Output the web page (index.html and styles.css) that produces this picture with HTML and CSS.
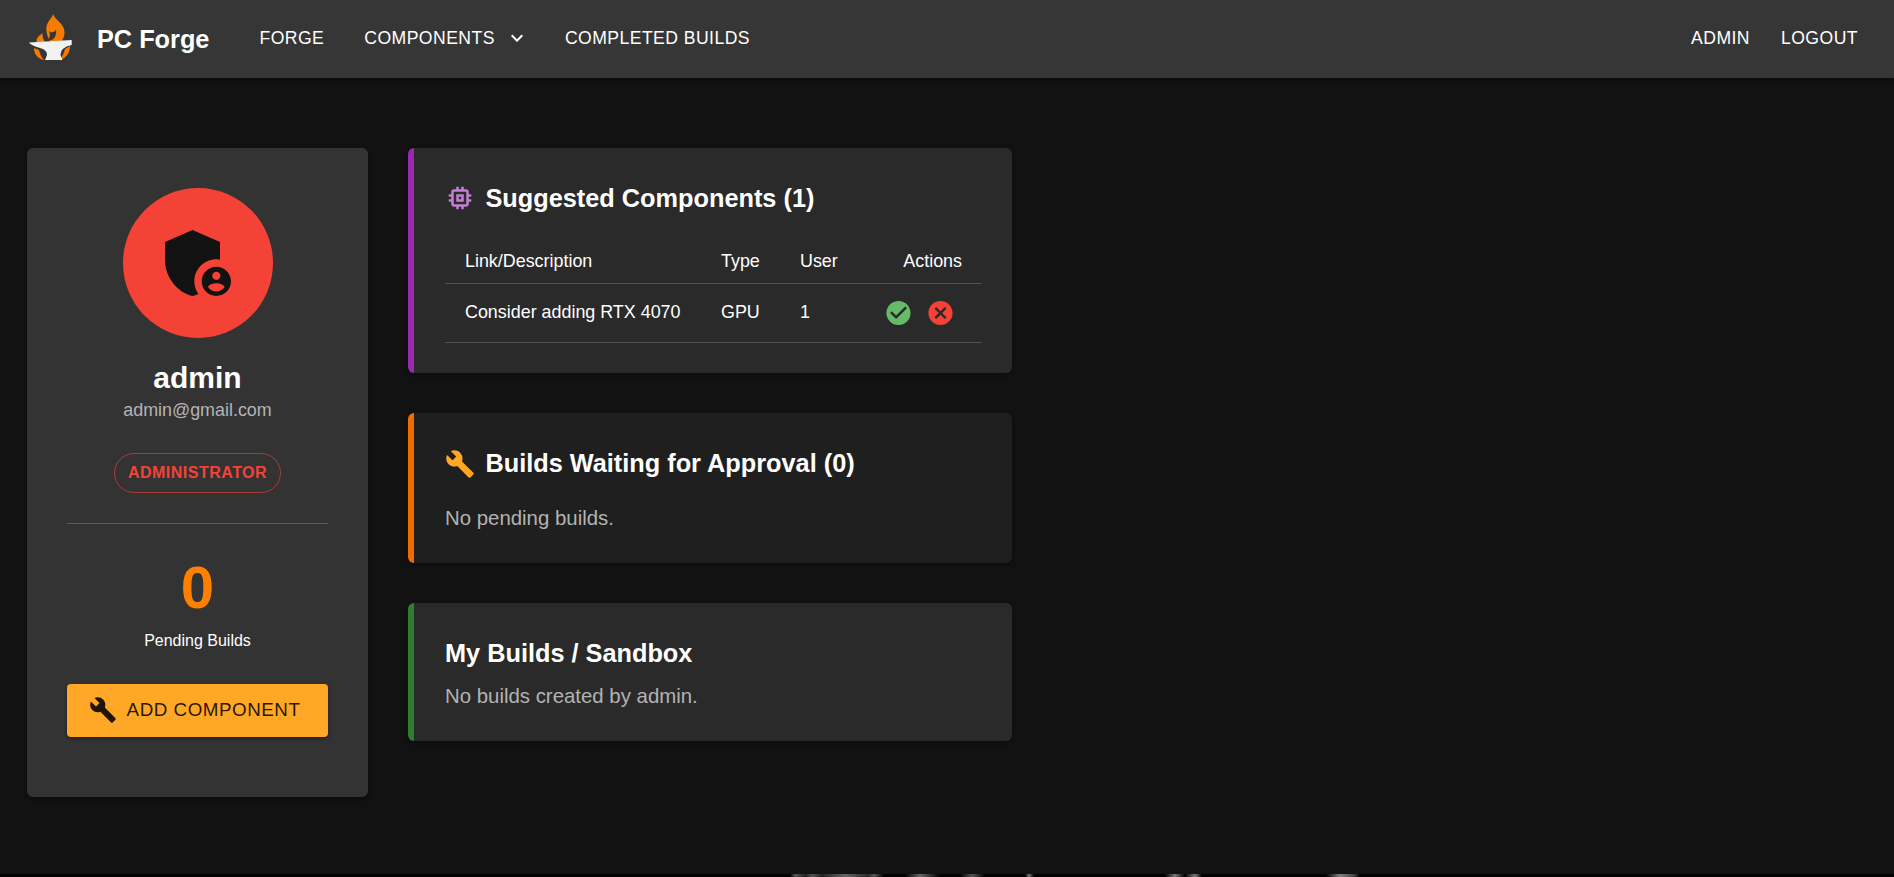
FILE: index.html
```html
<!DOCTYPE html>
<html lang="en">
<head>
<meta charset="utf-8">
<title>PC Forge</title>
<link rel="stylesheet" href="styles.css">
</head>
<body>
<header class="nav">
  <a class="brand">
    <svg class="logo" viewBox="0 0 44 52" aria-hidden="true">
      <path class="flame" d="M25.300 1.300C23 6 18 10 18.300 16 18.500 22 21 27 23 29H33C37 24 38 18 34 12 31 8 27 6 25.300 1.300z"/>
      <path class="notch" d="M21 18C23 20 27 20 28 16 28.500 20 28 25 24 27H20C22 25 22.500 21 21 18z"/>
      <path class="flame" d="M14.700 20.300C10 23 8 26 8.700 29.300H17C15 26 14 23 14.700 20.300z"/>
      <path class="flame" d="M6 35c0 6 4 11 10 12-3-3-4-6-5-10z"/>
      <path class="flame" d="M42 33c0 7-4 12-10 14 2-3 4-7 5-11z"/>
      <path class="anvil" d="M1 29.500 43.700 27v5c-5 1-9 3-10.700 7l-.5 3 2 5H17l2-5c0-4-3-6-7-7C8 34 3 32 1 29.500z"/>
    </svg>
    <span class="brand-name">PC Forge</span>
  </a>
  <nav class="nav-links">
    <a class="nav-link">FORGE</a>
    <a class="nav-link nav-drop">COMPONENTS
      <svg class="chev" viewBox="0 0 24 24" aria-hidden="true"><path d="M16.590 8.590 12 13.170 7.410 8.590 6 10l6 6 6-6z"/></svg>
    </a>
    <a class="nav-link">COMPLETED BUILDS</a>
  </nav>
  <nav class="nav-right">
    <a class="nav-link">ADMIN</a>
    <a class="nav-link">LOGOUT</a>
  </nav>
</header>

<main class="layout">
  <aside class="profile">
    <div class="avatar">
      <svg viewBox="0 0 24 24" aria-hidden="true">
        <path d="M17 11c.34 0 .67.04 1 .09V6.270L10.500 3 3 6.270v4.910c0 4.540 3.200 8.790 7.500 9.820.55-.13 1.080-.32 1.600-.55-.69-.98-1.100-2.170-1.100-3.450 0-3.310 2.690-6 6-6z"/>
        <path d="M17 13c-2.210 0-4 1.790-4 4s1.790 4 4 4 4-1.790 4-4-1.790-4-4-4zm0 1.380c.62 0 1.120.51 1.120 1.120s-.51 1.120-1.120 1.120-1.120-.51-1.120-1.120.5-1.120 1.120-1.120zm0 5.370c-.93 0-1.740-.46-2.240-1.170.05-.72 1.510-1.080 2.240-1.080s2.190.36 2.240 1.080c-.5.71-1.310 1.170-2.240 1.170z"/>
      </svg>
    </div>
    <h2 class="name">admin</h2>
    <p class="email">admin@gmail.com</p>
    <span class="role">ADMINISTRATOR</span>
    <hr class="rule">
    <div class="stat">0</div>
    <div class="stat-label">Pending Builds</div>
    <button class="add-btn" type="button">
      <svg viewBox="0 0 24 24" aria-hidden="true"><path d="M22.700 19l-9.100-9.100c.9-2.300.4-5-1.500-6.900-2-2-5-2.400-7.400-1.300L9 6 6 9 1.600 4.700C.4 7.100.9 10.100 2.900 12.100c1.900 1.900 4.600 2.400 6.900 1.500l9.100 9.100c.4.4 1 .4 1.400 0l2.300-2.300c.5-.4.500-1.100.1-1.400z"/></svg>
      ADD COMPONENT
    </button>
  </aside>

  <section class="panels">
    <article class="panel panel-purple">
      <h3 class="panel-title">
        <svg class="ico ico-purple" viewBox="0 0 24 24" aria-hidden="true"><path d="M15 9H9v6h6V9zm-2 4h-2v-2h2v2zm8-2V9h-2V7c0-1.100-.9-2-2-2h-2V3h-2v2h-2V3H9v2H7c-1.100 0-2 .9-2 2v2H3v2h2v2H3v2h2v2c0 1.100.9 2 2 2h2v2h2v-2h2v2h2v-2h2c1.100 0 2-.9 2-2v-2h2v-2h-2v-2h2zm-4 6H7V7h10v10z"/></svg>
        Suggested Components (1)
      </h3>
      <table class="table">
        <colgroup>
          <col class="col-desc"><col class="col-type"><col class="col-user"><col class="col-act">
        </colgroup>
        <thead>
          <tr><th>Link/Description</th><th>Type</th><th>User</th><th class="th-act">Actions</th></tr>
        </thead>
        <tbody>
          <tr>
            <td>Consider adding RTX 4070</td><td>GPU</td><td>1</td>
            <td>
              <div class="actions">
                <svg class="ok" viewBox="0 0 24 24" aria-hidden="true"><path d="M12 2C6.480 2 2 6.480 2 12s4.480 10 10 10 10-4.480 10-10S17.520 2 12 2zm-2 15l-5-5 1.410-1.410L10 14.170l7.590-7.590L19 8l-9 9z"/></svg>
                <svg class="no" viewBox="0 0 24 24" aria-hidden="true"><path d="M12 2C6.470 2 2 6.470 2 12s4.470 10 10 10 10-4.470 10-10S17.530 2 12 2zm5 13.590L15.590 17 12 13.410 8.410 17 7 15.590 10.590 12 7 8.410 8.410 7 12 10.590 15.590 7 17 8.410 13.410 12 17 15.590z"/></svg>
              </div>
            </td>
          </tr>
        </tbody>
      </table>
    </article>

    <article class="panel panel-orange">
      <h3 class="panel-title title-tall">
        <svg class="ico ico-orange" viewBox="0 0 24 24" aria-hidden="true"><path d="M22.700 19l-9.100-9.100c.9-2.300.4-5-1.500-6.900-2-2-5-2.400-7.400-1.300L9 6 6 9 1.600 4.700C.4 7.100.9 10.100 2.900 12.100c1.900 1.900 4.600 2.400 6.900 1.500l9.100 9.100c.4.4 1 .4 1.400 0l2.300-2.300c.5-.4.500-1.100.1-1.400z"/></svg>
        Builds Waiting for Approval (0)
      </h3>
      <p class="empty">No pending builds.</p>
    </article>

    <article class="panel panel-green">
      <h3 class="panel-title title-plain">My Builds / Sandbox</h3>
      <p class="empty">No builds created by admin.</p>
    </article>
  </section>
</main>

<footer class="strip"></footer>
</body>
</html>
```

FILE: styles.css
```css
* { box-sizing: border-box; }

html, body { height: 100%; }

body {
  margin: 0;
  height: 877px;
  overflow: hidden;
  display: flex;
  flex-direction: column;
  background: #121212;
  color: #fff;
  font-family: "Liberation Sans", Arial, sans-serif;
}

/* Top bar */
.nav {
  flex: none;
  height: 78px;
  display: flex;
  align-items: center;
  padding: 0 36px 0 28px;
  background: #363636;
  box-shadow: 0 2px 4px rgba(0, 0, 0, .4);
}

.brand {
  display: flex;
  align-items: center;
  gap: 25px;
  margin-right: 50px;
}

.logo { width: 44px; height: 52px; display: block; margin-top: -1px; }
.flame { fill: #f57c00; }
.notch { fill: #363636; }
.anvil { fill: #f2f2f2; }

.brand-name {
  font-size: 25.3px;
  font-weight: 700;
  white-space: nowrap;
}

.nav-links, .nav-right {
  display: flex;
  align-items: center;
  margin-top: -2px;
}

.nav-links { gap: 40px; }
.nav-right { gap: 31px; margin-left: auto; }

.nav-link {
  font-size: 17.6px;
  letter-spacing: .45px;
  white-space: nowrap;
}

.nav-drop {
  display: flex;
  align-items: center;
  gap: 10px;
  margin-right: -4px;
}

.chev { width: 24px; height: 24px; fill: #fff; }

/* Page layout */
.layout {
  flex: 1;
  display: flex;
  align-items: flex-start;
  gap: 40px;
  padding: 70px 0 0 27px;
}

/* Profile card */
.profile {
  flex: none;
  width: 341px;
  height: 649px;
  display: flex;
  flex-direction: column;
  align-items: center;
  padding: 40px 40px 0;
  background: #333;
  border-radius: 6px;
  box-shadow: 0 2px 4px rgba(0, 0, 0, .4);
}

.avatar {
  width: 150px;
  height: 150px;
  flex: none;
  display: flex;
  align-items: center;
  justify-content: center;
  border-radius: 50%;
  background: #f44336;
}

.avatar svg { width: 88px; height: 88px; fill: #121212; }

.name {
  margin: 21px 0 0;
  font-size: 30px;
  line-height: 38px;
  font-weight: 700;
}

.email {
  margin: 1px 0 0;
  font-size: 17.9px;
  line-height: 24px;
  color: #b3b3b3;
}

.role {
  margin-top: 31px;
  height: 40px;
  width: 167px;
  display: flex;
  align-items: center;
  justify-content: center;
  border: 1px solid rgba(244, 67, 54, .6);
  border-radius: 20px;
  color: #f44336;
  font-size: 16px;
  font-weight: 700;
  letter-spacing: .5px;
}

.rule {
  width: 100%;
  height: 1px;
  margin: 30px 0 0;
  border: 0;
  background: #5c5c5c;
}

.stat {
  margin-top: 29px;
  font-size: 60px;
  line-height: 70px;
  font-weight: 700;
  color: #ff8000;
}

.stat-label {
  margin-top: 6px;
  font-size: 16px;
  line-height: 24px;
}

.add-btn {
  margin-top: 31px;
  width: 100%;
  height: 53px;
  flex: none;
  display: flex;
  align-items: center;
  justify-content: center;
  gap: 10px;
  padding: 0 6px 2px 0;
  border: 0;
  border-radius: 4px;
  background: #ffa726;
  color: rgba(0, 0, 0, .87);
  font-family: inherit;
  font-size: 18.8px;
  letter-spacing: .53px;
  box-shadow: 0 2px 4px rgba(0, 0, 0, .35);
}

.add-btn svg { width: 28px; height: 28px; fill: rgba(0, 0, 0, .87); }

/* Right-hand panels */
.panels {
  flex: none;
  width: 604px;
  display: flex;
  flex-direction: column;
  gap: 40px;
}

.panel {
  padding: 32px 30px 30px 31px;
  border-left: 6px solid;
  border-radius: 6px;
  background: #2a2a2a;
  box-shadow: 0 2px 4px rgba(0, 0, 0, .35);
}

.panel-purple { border-left-color: #9c27b0; }
.panel-orange { border-left-color: #ef6c00; background: #1f1f1f; }
.panel-green { border-left-color: #2e7d32; }

.panel-title {
  display: flex;
  align-items: center;
  gap: 10.5px;
  margin: 0;
  height: 36px;
  font-size: 25.3px;
  font-weight: 700;
}

.title-tall { height: 38px; margin-bottom: 20px; }
.title-plain { margin-bottom: 10px; padding-top: 2px; }

.ico { width: 30px; height: 30px; flex: none; }
.ico-purple { fill: #c47fd4; }
.ico-orange { fill: #ffa726; }

.empty {
  margin: 0;
  font-size: 20.4px;
  line-height: 30px;
  color: #b3b3b3;
}

/* Suggestions table */
.table {
  width: 100%;
  margin-top: 23px;
  table-layout: fixed;
  border-collapse: collapse;
  font-size: 17.9px;
}

.col-desc { width: 256px; }
.col-type { width: 79px; }
.col-user { width: 84px; }

.table th, .table td {
  padding: 0 20px;
  text-align: left;
  font-weight: 400;
  border-bottom: 1px solid #515151;
}

.table th { height: 44px; padding-top: 2px; }
.table td { height: 59px; }
.table .th-act { text-align: right; }

.actions {
  display: flex;
  justify-content: flex-end;
  gap: 13px;
  margin-right: 7px;
}

.actions svg { width: 30px; height: 30px; display: block; }
.ok { fill: #66bb6a; }
.no { fill: #f44336; }

/* Cut-off artwork along the bottom edge */
.strip {
  flex: none;
  height: 3px;
  background:
    linear-gradient(90deg,
      #000 790px, #555 795px, #222 806px, #555 812px, #222 822px, #666 845px, #2a2a2a 868px, #555 874px, #000 884px,
      #000 905px, #666 920px, #000 940px,
      #000 960px, #555 972px, #000 985px,
      #000 1025px, #777 1029px, #000 1034px,
      #000 1165px, #777 1175px, #000 1185px, #777 1195px, #000 1202px,
      #000 1326px, #808080 1340px, #444 1354px, #000 1360px);
}
```
